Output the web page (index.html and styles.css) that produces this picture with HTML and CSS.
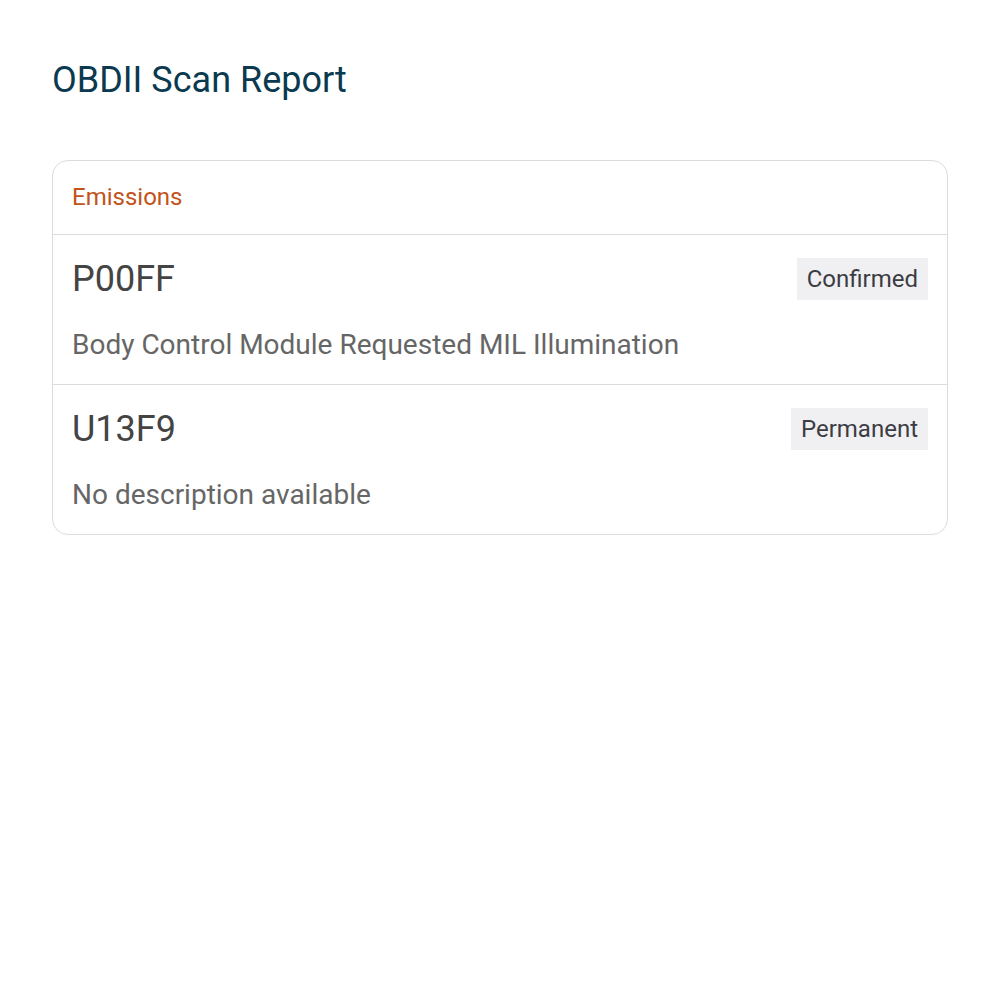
FILE: index.html
```html
<!DOCTYPE html>
<html lang="en">
<head>
    <meta charset="UTF-8">
    <meta name="viewport" content="width=device-width, initial-scale=1.0">
    <title>OBDII Scan Report</title>
    <link rel="stylesheet" href="styles.css">
</head>
<body>
    <h1 class="title">OBDII Scan Report</h1>
    <div class="card">
        <div class="card-header">Emissions</div>
        <div class="dtc">
            <div class="dtc-top">
                <span class="dtc-code">P00FF</span>
                <span class="badge">Confirmed</span>
            </div>
            <p class="dtc-desc">Body Control Module Requested MIL Illumination</p>
        </div>
        <div class="dtc">
            <div class="dtc-top">
                <span class="dtc-code">U13F9</span>
                <span class="badge">Permanent</span>
            </div>
            <p class="dtc-desc">No description available</p>
        </div>
    </div>
</body>
</html>
```

FILE: styles.css
```css
body {
    margin: 0;
    padding: 52px;
    font-family: Roboto, "Liberation Sans", sans-serif;
    background: #fff;
}
.title {
    margin: 4px 0 56px;
    font-size: 36px;
    font-weight: 400;
    line-height: 48px;
    color: #0b3a50;
}
.card {
    border: 1px solid #dcdcdc;
    border-radius: 16px;
    overflow: hidden;
}
.card-header {
    padding: 20px 19px;
    height: 33px;
    font-size: 24px;
    line-height: 33px;
    color: #c2531a;
    border-bottom: 1px solid #dcdcdc;
}
.dtc {
    padding: 23px 19px 0;
    height: 126px;
}
.dtc + .dtc {
    border-top: 1px solid #dcdcdc;
}
.dtc-top {
    display: flex;
    justify-content: space-between;
    align-items: center;
}
.dtc-code {
    font-size: 36px;
    line-height: 42px;
    color: #444;
}
.badge {
    background: #f0f0f3;
    padding: 0 10px;
    font-size: 24px;
    line-height: 42px;
    color: #3c3c43;
}
.dtc-desc {
    margin: 29px 0 0;
    font-size: 28px;
    line-height: 32px;
    color: #666;
}
```
